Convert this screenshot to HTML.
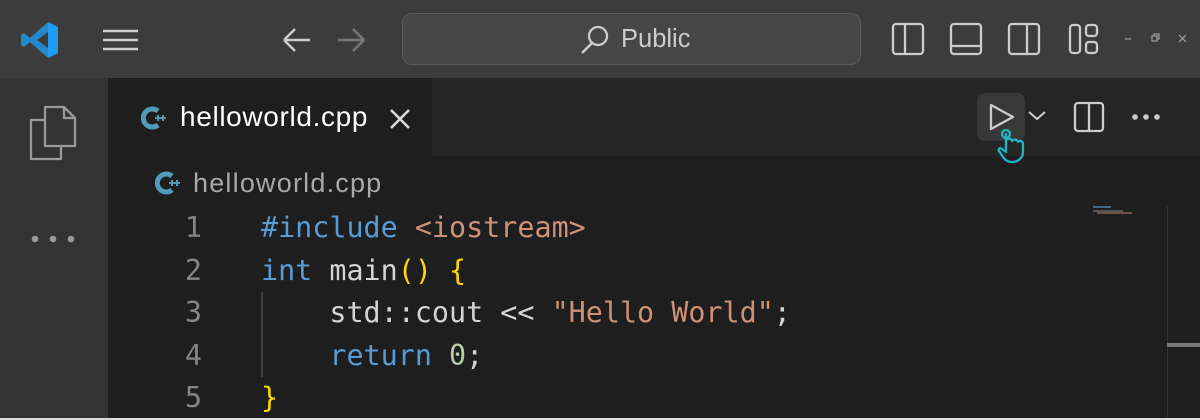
<!DOCTYPE html>
<html><head><style>
*{margin:0;padding:0;box-sizing:border-box}
body{width:1200px;height:420px;overflow:hidden;background:#1e1e1e;position:relative;font-family:"Liberation Sans",sans-serif}
.abs{position:absolute}
.code{font-family:"DejaVu Sans Mono","Liberation Mono",monospace;font-size:28.4px;line-height:42.5px;color:#d4d4d4;white-space:pre}
</style></head><body>
<div class="abs" style="left:0;top:0;width:1200px;height:78px;background:#3c3c3c"></div>
<svg class="abs" style="left:20px;top:20px" width="40" height="40" viewBox="0 0 40 40">
<path d="M28 2 L38 7 V33 L28 38 L10 22 L4 27 L1 25 V15 L4 13 L10 18 Z M28 12 L17 20 L28 28 Z" fill="#2489ca" fill-rule="evenodd"/>
<path d="M28 2 L38 7 V33 L28 38 Z" fill="#1f9cf0"/>
</svg>
<svg class="abs" style="left:100px;top:28px" width="40" height="24"><path d="M3 3H38M3 12H38M3 21H38" stroke="#ccc" stroke-width="2.5"/></svg>
<svg class="abs" style="left:280px;top:26px" width="90" height="28"><path d="M4 14H30M4 14L15 3M4 14L15 25" stroke="#ccc" stroke-width="2.5" fill="none"/><path d="M84 14H58M84 14L73 3M84 14L73 25" stroke="#777" stroke-width="2.5" fill="none"/></svg>
<div class="abs" style="left:402px;top:13px;width:459px;height:52px;border:1.5px solid #5a5a5a;border-radius:10px;background:#464646"></div>
<svg class="abs" style="left:578px;top:22px" width="34" height="34"><circle cx="20" cy="14" r="9" stroke="#ccc" stroke-width="2.3" fill="none"/><path d="M14 21L4 31" stroke="#ccc" stroke-width="2.5"/></svg>
<div class="abs" style="left:621px;top:25px;font-size:25.5px;color:#ccc">Public</div>
<svg class="abs" style="left:890px;top:22px" width="240" height="34" viewBox="0 0 240 34">
<g stroke="#ccc" stroke-width="2.3" fill="none">
<rect x="3" y="2" width="30" height="30" rx="3"/><path d="M15 2V32"/>
<rect x="61" y="2" width="30" height="30" rx="3"/><path d="M61 24H91"/>
<rect x="119" y="2" width="30" height="30" rx="3"/><path d="M137 2V32"/>
<rect x="180" y="3" width="10" height="28" rx="3"/><rect x="196" y="3" width="11" height="11" rx="3"/><rect x="196" y="20" width="11" height="11" rx="3"/>
</g></svg>
<svg class="abs" style="left:1120px;top:30px" width="80" height="20"><g stroke="#999" stroke-width="1.3" fill="none"><path d="M5 9H11"/><rect x="32" y="6" width="5" height="5"/><path d="M34 6V4H39V9H37"/><path d="M59 5L66 12M66 5L59 12"/></g></svg>
<div class="abs" style="left:0;top:78px;width:108px;height:342px;background:#333"></div>
<svg class="abs" style="left:26px;top:103px" width="54" height="60"><g stroke="#999" stroke-width="2.3" fill="none" stroke-linejoin="round"><path d="M19 4H38L49 15V43H19Z"/><path d="M38 4V15H49"/><path d="M19 17H5V56H35V43"/></g></svg>
<svg class="abs" style="left:28px;top:231px" width="50" height="16"><g fill="#999"><circle cx="7" cy="8" r="3.3"/><circle cx="25" cy="8" r="3.3"/><circle cx="43" cy="8" r="3.3"/></g></svg>
<div class="abs" style="left:108px;top:78px;width:1092px;height:78px;background:#252526"></div>
<div class="abs" style="left:108px;top:78px;width:324px;height:78px;background:#1e1e1e"></div>
<svg class="abs" style="left:141px;top:106px" width="26" height="24"><path d="M17 5A9 9 0 1 0 17 19" stroke="#519aba" stroke-width="5" fill="none"/><path d="M17 9V15M14 12H20M22 9V15M19 12H25" stroke="#519aba" stroke-width="2"/></svg>
<div class="abs" style="left:180px;top:101px;font-size:28px;letter-spacing:0.65px;color:#fff">helloworld.cpp</div>
<svg class="abs" style="left:388px;top:107px" width="24" height="24"><path d="M3 3L21 21M21 3L3 21" stroke="#ddd" stroke-width="2.5"/></svg>
<div class="abs" style="left:977px;top:93px;width:48px;height:48px;border-radius:8px;background:#383838"></div>
<svg class="abs" style="left:985px;top:100px" width="34" height="34"><path d="M6 5L28 17L6 29Z" stroke="#ccc" stroke-width="2.3" fill="none" stroke-linejoin="round"/></svg>
<svg class="abs" style="left:1026px;top:108px" width="22" height="16"><path d="M3 4L11 11L19 4" stroke="#ccc" stroke-width="2" fill="none"/></svg>
<svg class="abs" style="left:1072px;top:100px" width="34" height="34"><g stroke="#ccc" stroke-width="2.3" fill="none"><rect x="3" y="3" width="28" height="28" rx="3"/><path d="M17 3V31"/></g></svg>
<svg class="abs" style="left:1130px;top:110px" width="34" height="14"><g fill="#ccc"><circle cx="5" cy="7" r="2.8"/><circle cx="16" cy="7" r="2.8"/><circle cx="27" cy="7" r="2.8"/></g></svg>
<svg class="abs" style="left:996px;top:124px" width="40" height="44"><g stroke="#1db6c2" stroke-width="2.3" fill="none" stroke-linecap="round" stroke-linejoin="round"><circle cx="10" cy="10" r="4"/><path d="M10 10V26M10 16C12 14 15 14 16 17M16 17C18 15 21 15 22 18M22 18C24 16 27 17 27 20V28C27 34 22 38 16 38C12 38 9 36 7 33L3 27C2 25 4 23 6 25L10 28"/></g></svg>
<svg class="abs" style="left:155px;top:171px" width="26" height="24"><path d="M17 5A9 9 0 1 0 17 19" stroke="#519aba" stroke-width="5" fill="none"/><path d="M17 9V15M14 12H20M22 9V15M19 12H25" stroke="#519aba" stroke-width="2"/></svg>
<div class="abs" style="left:193px;top:168px;font-size:27px;letter-spacing:1.2px;color:#a9a9a9">helloworld.cpp</div>
<div class="abs code" style="left:140px;top:207px;width:62px;text-align:right;color:#858585">1
2
3
4
5</div>
<div class="abs" style="left:261px;top:292px;width:1.5px;height:85px;background:#404040"></div>
<div class="abs code" style="left:261px;top:207px"><span style="color:#569cd6">#include</span> <span style="color:#ce9178">&lt;iostream&gt;</span>
<span style="color:#569cd6">int</span> main<span style="color:#ffd700">()</span> <span style="color:#ffd700">{</span>
    std::cout &lt;&lt; <span style="color:#ce9178">"Hello World"</span>;
    <span style="color:#569cd6">return</span> <span style="color:#b5cea8">0</span>;
<span style="color:#ffd700">}</span></div>
<div class="abs" style="left:1093px;top:206px;width:18px;height:2px;background:#3c6a90"></div>
<div class="abs" style="left:1093px;top:210px;width:30px;height:2px;background:#555"></div>
<div class="abs" style="left:1097px;top:212px;width:35px;height:2px;background:#6a5248"></div>
<div class="abs" style="left:1167px;top:206px;width:1px;height:214px;background:#333"></div>
<div class="abs" style="left:1167px;top:343px;width:33px;height:4px;background:#777"></div>
<div class="abs" style="left:0;top:418px;width:1200px;height:2px;background:#ddd"></div>
</body></html>
